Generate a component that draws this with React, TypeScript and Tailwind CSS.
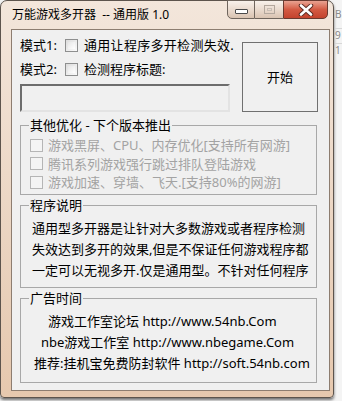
import type { ReactNode } from "react";

const FONT = "font-['Noto_Sans','Noto_Sans_CJK_SC',sans-serif]";

function Check({ disabled = false }: { disabled?: boolean }) {
  return (
    <span
      className={
        disabled
          ? "w-[13px] h-[13px] shrink-0 border border-[#b5b5b5] bg-[#f4f4f4]"
          : "w-[13px] h-[13px] shrink-0 border border-[#8e8f8f] bg-gradient-to-br from-[#dcdcdc] to-[#fbfbfb] p-[2px]"
      }
    >
      {!disabled && <span className="block w-full h-full bg-gradient-to-br from-[#e6e6e6] to-[#ffffff]" />}
    </span>
  );
}

function Group({ title, className, children }: { title: string; className: string; children: ReactNode }) {
  return (
    <div className={"relative border border-[#a8a8a8] " + className}>
      <span className="absolute -top-[9px] left-[8px] px-[1px] bg-[#f0f0f0] text-[13px] leading-[16px] text-black whitespace-nowrap">
        {title}
      </span>
      {children}
    </div>
  );
}

export default function App() {
  const disabledItems = [
    "游戏黑屏、CPU、内存优化[支持所有网游]",
    "腾讯系列游戏强行跳过排队登陆游戏",
    "游戏加速、穿墙、飞天.[支持80%的网游]",
  ];

  return (
    <div className={"w-[342px] h-[401px] bg-[#f4f4f4] flex overflow-hidden " + FONT}>
      {/* window */}
      <div className="w-[334px] h-[398px] shrink-0 flex flex-col rounded-t-[7px] rounded-b-[4px] border border-[#5d544d] bg-gradient-to-b from-[#f3e6db] via-[#ecd7c5] to-[#e6c8ae] shadow-[0_2px_3px_rgba(0,0,0,0.55)]">
        {/* title bar */}
        <div className="h-[28px] flex items-start justify-between pl-[11px] pr-[5px]">
          <span className="mt-[6px] text-[12px] leading-[16px] text-black whitespace-pre">万能游戏多开器  -- 通用版 1.0</span>
          <div className="flex -mt-px h-[19px]">
            <div className="w-[28px] h-full border border-[#6f655d] rounded-bl-[5px] bg-gradient-to-b from-[#f8f1eb] via-[#eadbcf] to-[#d9c3b1] flex items-end justify-center pb-[4px]">
              <span className="w-[13px] h-[5px] border border-[#4a4a4a] bg-white rounded-[1px]" />
            </div>
            <div className="w-[28px] h-full border-y border-[#6f655d] bg-gradient-to-b from-[#f8f1eb] via-[#eadbcf] to-[#d9c3b1] flex items-center justify-center">
              <span className="w-[11px] h-[9px] border border-[#b3a79d] p-[2px]">
                <span className="block w-full h-full border border-[#c9beb5]" />
              </span>
            </div>
            <div className="w-[45px] h-full border border-[#6a3a30] rounded-br-[5px] bg-gradient-to-b from-[#e8a291] via-[#d35a43] to-[#c4432d] flex items-center justify-center">
              <svg width="16" height="12" viewBox="0 0 16 12">
                <path d="M3 1.5 L13 10.5 M13 1.5 L3 10.5" stroke="#5a2a22" strokeWidth="4.5" strokeLinecap="round" />
                <path d="M3 1.5 L13 10.5 M13 1.5 L3 10.5" stroke="#ffffff" strokeWidth="2.6" strokeLinecap="round" />
              </svg>
            </div>
          </div>
        </div>

        {/* client area */}
        <div className="ml-[10px] w-[319px] h-[362px] border border-[#8d7d70] bg-[#f0f0f0] text-[13px] text-black">
          <div className="flex pl-[8px]">
            <div className="w-[210px] shrink-0 flex flex-col">
              <div className="mt-[7px] h-[16px] flex items-center leading-[16px] whitespace-nowrap">
                <span className="w-[45px] shrink-0">模式1:</span>
                <Check />
                <span className="ml-[6px] shrink-0 tracking-[0.3px]">通用让程序多开检测失效.</span>
              </div>
              <div className="mt-[8px] h-[16px] flex items-center leading-[16px] whitespace-nowrap">
                <span className="w-[45px] shrink-0">模式2:</span>
                <Check />
                <span className="ml-[6px] shrink-0">检测程序标题:</span>
              </div>
              <div className="mt-[7px] h-[28px] w-[210px] border-2 border-t-[#6d6d6d] border-l-[#6d6d6d] border-b-[#e3e3e3] border-r-[#e3e3e3] bg-[#f0f0f0]" />
            </div>
            <button className="ml-[12px] mt-[12px] w-[76px] h-[70px] shrink-0 border border-[#707070] bg-[#f0f0f0] text-[13px] leading-[16px] text-black">
              开始
            </button>
          </div>

          <div className="ml-[8px] w-[297px] flex flex-col">
            <Group title="其他优化 - 下个版本推出" className="mt-[13px] h-[70px] pt-[10px] pl-[9px]">
              {disabledItems.map((t) => (
                <div key={t} className="h-[18.5px] flex items-center">
                  <Check disabled />
                  <span className="ml-[5px] text-[#a3a3a3] whitespace-nowrap leading-[16px]">{t}</span>
                </div>
              ))}
            </Group>

            <Group title="程序说明" className="mt-[10px] h-[83px] pt-[12px] pl-[11px] leading-[21px]">
              <div className="whitespace-nowrap">通用型多开器是让针对大多数游戏或者程序检测</div>
              <div className="whitespace-nowrap">失效达到多开的效果,但是不保证任何游戏程序都</div>
              <div className="whitespace-nowrap">一定可以无视多开.仅是通用型。不针对任何程序</div>
            </Group>

            <Group title="广告时间" className="mt-[10px] h-[85px] pt-[12px] leading-[21px]">
              <div className="pl-[27px] whitespace-nowrap">游戏工作室论坛 http://www.54nb.Com</div>
              <div className="pl-[20px] whitespace-nowrap">nbe游戏工作室 http://www.nbegame.Com</div>
              <div className="pl-[13px] whitespace-nowrap">推荐:挂机宝免费防封软件 http://soft.54nb.com</div>
            </Group>
          </div>
        </div>
      </div>

      {/* desktop behind */}
      <div className="flex-1 flex flex-col pl-[1px] text-[10px] leading-[12px] text-[#8a8a8a] whitespace-nowrap">
        <span className="mt-[8px] h-[12px]">B</span>
        <span className="mt-[8px] h-[13px] border-t border-[#d8d8d8]">9</span>
        <span className="mt-[2px] h-[13px] border-t border-[#d8d8d8]">1</span>
      </div>
    </div>
  );
}
